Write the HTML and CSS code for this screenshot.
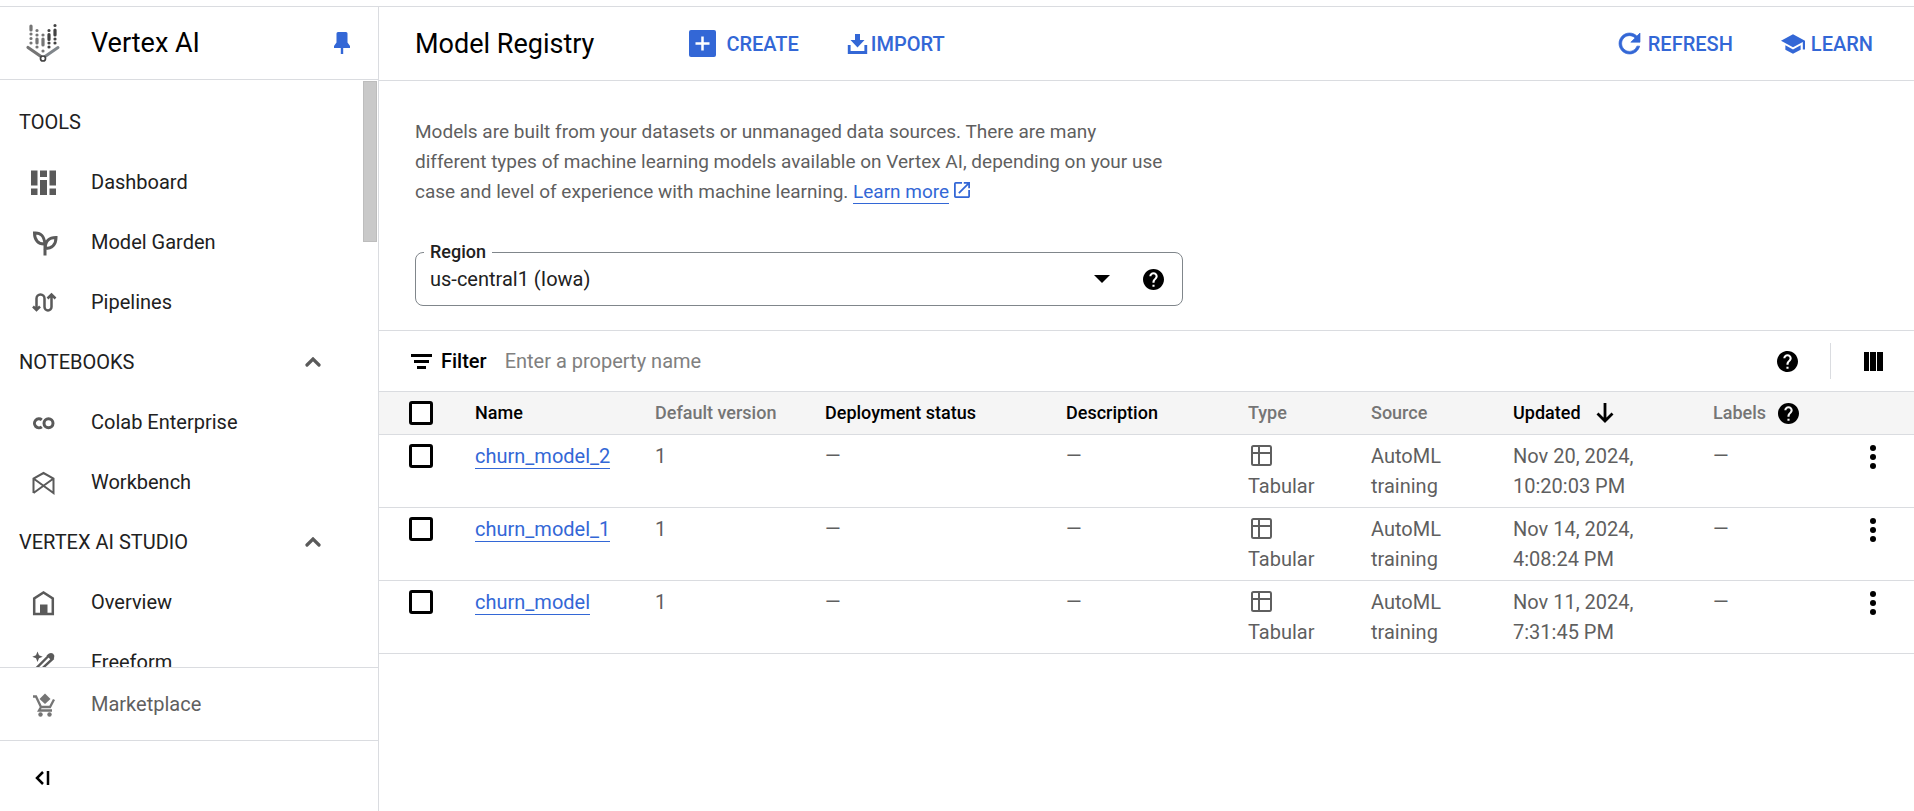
FILE: index.html
```html
<!DOCTYPE html>
<html lang="en">
<head>
<meta charset="utf-8">
<title>Model Registry – Vertex AI</title>
<link rel="stylesheet" href="styles.css">
</head>
<body>
<svg class="sprite" aria-hidden="true">
  <symbol id="i-help" viewBox="2 2 20 20"><path d="M12 2C6.48 2 2 6.48 2 12s4.48 10 10 10 10-4.48 10-10S17.52 2 12 2zm1 17h-2v-2h2v2zm2.07-7.75l-.9.92C13.45 12.9 13 13.5 13 15h-2v-.5c0-1.1.45-2.1 1.17-2.83l1.24-1.26c.37-.36.59-.86.59-1.41 0-1.1-.9-2-2-2s-2 .9-2 2H8c0-2.21 1.79-4 4-4s4 1.79 4 4c0 .88-.36 1.68-.93 2.25z"/></symbol>
  <symbol id="i-up" viewBox="0 0 16 10"><path d="M2 8l6-6 6 6" fill="none" stroke="currentColor" stroke-width="3.200" stroke-linecap="round"/></symbol>
  <symbol id="i-table" viewBox="0 0 21 21"><path d="M2.500 1h16a1.500 1.500 0 0 1 1.500 1.500v16a1.500 1.500 0 0 1-1.500 1.500h-16a1.500 1.500 0 0 1-1.500-1.500v-16a1.500 1.500 0 0 1 1.500-1.500zM8 1v19M1 8h19" fill="none" stroke="currentColor" stroke-width="2"/></symbol>
  <symbol id="i-dots" viewBox="0 0 6 24"><circle cx="3" cy="3" r="3"/><circle cx="3" cy="12" r="3"/><circle cx="3" cy="21" r="3"/></symbol>
</svg>
<div class="app">
  <aside class="sidebar">
    <header class="brand">
      <svg class="brand-logo" viewBox="0 0 34 40" aria-hidden="true">
        <g fill="none" stroke="#757575" stroke-width="3.200" stroke-linecap="round">
          <path d="M5 3v4M5 11v0M5 15.500v0M5 20v0"/>
          <path d="M11 7.500v0M11 12v0M11 16v4M11 24v0"/>
          <path d="M17 12v0M17 16v6M17 28v0"/>
          <path d="M2 24.500l13 9"/>
        </g>
        <g fill="none" stroke="#424242" stroke-width="3.200" stroke-linecap="round">
          <path d="M23 7.500v0M23 11.500v5M23 20v0M23 24v0"/>
          <path d="M29 2.500v0M29 7v5M29 16v0M29 20v0"/>
        </g>
        <path d="M32 24.500l-13 9" fill="none" stroke="#80868b" stroke-width="3" stroke-linecap="round"/>
        <circle cx="17" cy="35.500" r="2.500" fill="#fff" stroke="#424242" stroke-width="1.700"/>
      </svg>
      <span class="brand-name">Vertex AI</span>
      <button class="icon-button pin" aria-label="Unpin navigation"><svg class="i-pin" viewBox="0 0 16 22"><path d="M4 0h8a1.500 1.500 0 0 1 1.500 1.500V10.500L16 14v2H9.200v6H6.800v-6H0v-2l2.500-3.500V1.500A1.500 1.500 0 0 1 4 0z"/></svg></button>
    </header>
    <div class="nav-area">
      <nav class="nav" aria-label="Vertex AI">
        <h2 class="nav-head">TOOLS</h2>
        <a class="nav-item" href="#"><svg class="i-nav" viewBox="0 0 27 27"><path d="M1 1.500h6.500v15H1zM1 19.500h6.500v6.500H1zM10 1.500h7V8h-7zM10 11h7v15h-7zM19.500 1.500H26v15h-6.500zM19.500 19.500H26v6.500h-6.500z"/></svg>Dashboard</a>
        <a class="nav-item" href="#"><svg class="i-nav" viewBox="0 0 27 27"><path d="M4.500 4c6.500-.5 9.500 3 10.500 11-7 .5-10.500-4-10.500-11zM26 8.500c-7.500 0-10.500 3.500-11 11 7 0 11-4 11-11zM15 14v12.500" fill="none" stroke="currentColor" stroke-width="3"/></svg>Model Garden</a>
        <a class="nav-item" href="#"><svg class="i-nav" viewBox="0 0 27 27"><path d="M6.500 20V9.500a4 4 0 0 1 8 0v8.500a3.500 3.500 0 0 0 7 0V7M3 17.500l3.500 3.500 3.500-3.500M17.500 9.500l4-4 4 4" fill="none" stroke="currentColor" stroke-width="2.500"/></svg>Pipelines</a>
        <h2 class="nav-head"><span>NOTEBOOKS</span><button class="icon-button" aria-label="Collapse Notebooks"><svg class="i-up"><use href="#i-up"/></svg></button></h2>
        <a class="nav-item" href="#"><svg class="i-nav" viewBox="0 0 27 27"><g fill="none" stroke="currentColor" stroke-width="3"><path d="M11.800 10.800a4.500 4.500 0 1 0 0 7"/><circle cx="18.500" cy="14.300" r="4.500"/></g></svg>Colab Enterprise</a>
        <a class="nav-item" href="#"><svg class="i-nav" viewBox="0 0 27 27"><path d="M3.500 24V9.500l10-5.500 10 5.500V24l-20-14.500M23.500 9.500L3.500 24" fill="none" stroke="currentColor" stroke-width="2"/></svg>Workbench</a>
        <h2 class="nav-head"><span>VERTEX AI STUDIO</span><button class="icon-button" aria-label="Collapse Vertex AI Studio"><svg class="i-up"><use href="#i-up"/></svg></button></h2>
        <a class="nav-item" href="#"><svg class="i-nav" viewBox="0 0 27 27"><path d="M4.200 25V9.500L13.500 3.500l9.300 6V25z" fill="none" stroke="currentColor" stroke-width="2.500"/><path d="M10 15.500h7.500v10H10z"/></svg>Overview</a>
        <a class="nav-item" href="#"><svg class="i-nav" viewBox="0 0 27 27"><path d="M7.500 2.500l1.500 3.700 3.700 1.500L9 9.200l-1.500 3.700L6 9.200 2.300 7.700 6 6.200z"/><path d="M5 20.500L19.500 6M9.500 22L23.500 9" fill="none" stroke="currentColor" stroke-width="2.400"/><path d="M16.500 6.500l2.500-2a3.500 3.500 0 0 1 5 4.500l-2.500 2.500z"/></svg>Freeform</a>
      </nav>
      <div class="scrollbar" aria-hidden="true"></div>
    </div>
    <a class="market" href="#"><svg class="i-nav" viewBox="0 0 27 27"><path d="M3 5.500h3l5 10.500h9l4-7.500M11 16l-2 3.500h13" fill="none" stroke="currentColor" stroke-width="2.300"/><path d="M15 2.500l5.500 5.500-5.500 5-5.500-5z"/><circle cx="10.500" cy="23.500" r="2.200"/><circle cx="19.500" cy="23.500" r="2.200"/></svg>Marketplace</a>
    <footer class="side-foot"><button class="icon-button" aria-label="Collapse navigation"><svg class="i-collapse" viewBox="0 0 15 14"><path d="M8 1L2 7l6 6M13 0v14" fill="none" stroke="currentColor" stroke-width="2.500"/></svg></button></footer>
  </aside>
  <main class="main">
    <header class="toolbar">
      <h1 class="title">Model Registry</h1>
      <button class="action create"><svg class="i-create" viewBox="0 0 27 27"><rect width="27" height="27" rx="2"/><path d="M13.500 6.500v14M6.500 13.500h14" stroke="#fff" stroke-width="2.500"/></svg>CREATE</button>
      <button class="action import"><svg class="i-import" viewBox="0 0 19 20"><path d="M7 0h5v6h4.500l-7 7.500L2.500 6H7z"/><path d="M1.200 11v7.500h16.600V11" fill="none" stroke="currentColor" stroke-width="2.800"/></svg>IMPORT</button>
      <button class="action refresh"><svg class="i-refresh" viewBox="4 4 16 16"><path d="M17.650 6.350C16.200 4.900 14.210 4 12 4c-4.420 0-7.990 3.580-7.990 8s3.570 8 7.990 8c3.730 0 6.840-2.550 7.730-6h-2.080c-.82 2.330-3.040 4-5.650 4-3.310 0-6-2.690-6-6s2.690-6 6-6c1.660 0 3.140.69 4.220 1.780L13 11h7V4l-2.350 2.350z" stroke="currentColor" stroke-width=".5"/></svg>REFRESH</button>
      <button class="action learn"><svg class="i-learn" viewBox="1 3 22 18"><path d="M5 13.180v4L12 21l7-3.820v-4L12 17l-7-3.820zM12 3L1 9l11 6 9-4.910V17h2V9L12 3z"/></svg>LEARN</button>
    </header>
    <section class="intro">
      <p class="lead">Models are built from your datasets or unmanaged data sources. There are many <br>different types of machine learning models available on Vertex AI, depending on your use case and level of experience with machine learning. <a class="link" href="#">Learn more</a> <svg class="i-ext" viewBox="3 3 18 18"><path d="M19 19H5V5h7V3H5a2 2 0 0 0-2 2v14a2 2 0 0 0 2 2h14c1.100 0 2-.9 2-2v-7h-2v7zM14 3v2h3.590l-9.830 9.830 1.410 1.410L19 6.410V10h2V3h-7z"/></svg></p>
      <div class="field">
        <label class="field-label" for="region">Region</label>
        <select class="field-select" id="region"><option>us-central1 (Iowa)</option></select>
        <svg class="i-caret" viewBox="0 0 16 8" aria-hidden="true"><path d="M0 0h16L8 8z"/></svg>
        <button class="icon-button" aria-label="Region help"><svg class="i-help"><use href="#i-help"/></svg></button>
      </div>
    </section>
    <section class="filter">
      <svg class="i-filter" viewBox="0 0 21 15"><path d="M0 0h21v3H0zM3 6h15v3H3zM6 12h9v3H6z"/></svg>
      <label class="filter-label" for="filter">Filter</label>
      <input class="filter-input" id="filter" type="text" placeholder="Enter a property name">
      <button class="icon-button" aria-label="Filter help"><svg class="i-help"><use href="#i-help"/></svg></button>
      <span class="divider"></span>
      <button class="icon-button" aria-label="Column display options"><svg class="i-cols" viewBox="0 0 19 19"><path d="M0 0h5v19H0zM6 0h6v19H6zM13 0h6v19h-6z"/></svg></button>
    </section>
    <table class="models">
      <colgroup><col class="c-check"><col class="c-name"><col class="c-version"><col class="c-deploy"><col class="c-desc"><col class="c-type"><col class="c-source"><col class="c-updated"><col class="c-labels"><col class="c-menu"></colgroup>
      <thead>
        <tr>
          <th class="pick"><input class="check" type="checkbox" aria-label="Select all"></th>
          <th class="strong">Name</th><th>Default version</th><th class="strong">Deployment status</th><th class="strong">Description</th><th>Type</th><th>Source</th>
          <th class="strong"><span class="th-row sort">Updated<svg class="i-down" viewBox="0 0 18 20"><path d="M9 0v18M1.500 10.500L9 18l7.500-7.500" fill="none" stroke="currentColor" stroke-width="2.800"/></svg></span></th>
          <th><span class="th-row">Labels<button class="icon-button" aria-label="Labels help"><svg class="i-help"><use href="#i-help"/></svg></button></span></th>
          <th></th>
        </tr>
      </thead>
      <tbody>
        <tr>
          <td class="pick"><input class="check" type="checkbox" aria-label="Select churn_model_2"></td>
          <td><a class="link" href="#">churn_model_2</a></td><td>1</td><td>—</td><td>—</td>
          <td><svg class="i-table"><use href="#i-table"/></svg>Tabular</td><td>AutoML<br>training</td><td>Nov 20, 2024,<br>10:20:03 PM</td><td>—</td>
          <td class="menu"><button class="icon-button" aria-label="Actions"><svg class="i-dots"><use href="#i-dots"/></svg></button></td>
        </tr>
        <tr>
          <td class="pick"><input class="check" type="checkbox" aria-label="Select churn_model_1"></td>
          <td><a class="link" href="#">churn_model_1</a></td><td>1</td><td>—</td><td>—</td>
          <td><svg class="i-table"><use href="#i-table"/></svg>Tabular</td><td>AutoML<br>training</td><td>Nov 14, 2024,<br>4:08:24 PM</td><td>—</td>
          <td class="menu"><button class="icon-button" aria-label="Actions"><svg class="i-dots"><use href="#i-dots"/></svg></button></td>
        </tr>
        <tr>
          <td class="pick"><input class="check" type="checkbox" aria-label="Select churn_model"></td>
          <td><a class="link" href="#">churn_model</a></td><td>1</td><td>—</td><td>—</td>
          <td><svg class="i-table"><use href="#i-table"/></svg>Tabular</td><td>AutoML<br>training</td><td>Nov 11, 2024,<br>7:31:45 PM</td><td>—</td>
          <td class="menu"><button class="icon-button" aria-label="Actions"><svg class="i-dots"><use href="#i-dots"/></svg></button></td>
        </tr>
      </tbody>
    </table>
  </main>
</div>
</body>
</html>
```
FILE: styles.css
```css
:root {
  --line: #dadce0;
  --blue: #3367d6;
  --ink: #212121;
  --muted: #5f5f5f;
}
* { box-sizing: border-box; }
body {
  margin: 0;
  padding-top: 6px;
  height: 100vh;
  overflow: hidden;
  background: #fff;
  color: var(--ink);
  font: 400 20px/30px Roboto, "Liberation Sans", sans-serif;
}
svg { display: block; fill: currentColor; flex: none; overflow: visible; }
.sprite { position: absolute; width: 0; height: 0; }
button, input, select { font: inherit; color: inherit; }
.icon-button { display: flex; padding: 0; border: 0; background: none; color: #000; cursor: pointer; }

.app { display: flex; height: 100%; border-top: 1px solid var(--line); }

/* Sidebar */
.sidebar { display: flex; flex-direction: column; flex: none; width: 379px; border-right: 1px solid var(--line); }
.brand { display: flex; align-items: center; height: 73px; flex: none; padding: 0 28px 0 26px; border-bottom: 1px solid var(--line); }
.brand-logo { width: 34px; height: 40px; }
.brand-name { margin-left: 31px; font-size: 27px; color: #000; }
.pin { margin-left: auto; color: var(--blue); }
.i-pin { width: 16px; height: 22px; }
.nav-area { display: flex; flex: 1; min-height: 0; overflow: hidden; padding-top: 1px; }
.nav { flex: 1; min-width: 0; padding-top: 11px; }
.nav-head { display: flex; align-items: center; justify-content: space-between; height: 60px; margin: 0; padding: 0 42px 0 19px; font-size: 20px; font-weight: 400; }
.nav-head .icon-button { color: #5a5a5a; }
.nav-item, .market { display: flex; align-items: center; gap: 34px; height: 60px; padding-left: 30px; color: var(--ink); text-decoration: none; }
.i-nav { width: 27px; height: 27px; color: #5a5a5a; }
.i-up { width: 16px; height: 10px; }
.scrollbar { width: 14px; height: 161px; margin-right: 1px; border: 1px solid #bdbdbd; background: #c9c9c9; }
.market { flex: none; height: 74px; border-top: 1px solid var(--line); border-bottom: 1px solid var(--line); color: var(--muted); }
.market .i-nav { color: #757575; }
.side-foot { display: flex; align-items: center; flex: none; height: 70px; padding: 4px 0 0 35px; }
.i-collapse { width: 15px; height: 14px; }

/* Main */
.main { flex: 1; min-width: 0; }
.toolbar { display: flex; align-items: center; height: 74px; padding: 0 41px 0 36px; border-bottom: 1px solid var(--line); }
.title { margin: 0; font-size: 27px; font-weight: 400; color: #000; }
.action { display: flex; align-items: center; padding: 0; border: 0; background: none; color: var(--blue); font-weight: 500; cursor: pointer; }
.create { gap: 10px; margin-left: 95px; }
.import { gap: 4px; margin-left: 49px; }
.refresh { gap: 8px; margin-left: auto; }
.learn { gap: 6px; margin-left: 48px; }
.i-create { width: 27px; height: 27px; }
.i-import { width: 19px; height: 20px; }
.i-refresh { width: 21px; height: 21px; }
.i-learn { width: 24px; height: 20px; }
.intro { padding: 36px 36px 24px; border-bottom: 1px solid var(--line); }
.lead { max-width: 768px; margin: 0 0 45px; font-size: 19px; color: var(--muted); }
.link { color: var(--blue); text-decoration: none; border-bottom: 1px solid var(--blue); }
.i-ext { display: inline-block; width: 16px; height: 16px; color: var(--blue); }
.field { position: relative; display: flex; align-items: center; max-width: 768px; height: 54px; padding-right: 18px; border: 1px solid #80868b; border-radius: 8px; }
.field-label { position: absolute; top: -11px; left: 8px; padding: 0 6px; background: #fff; font-size: 18px; line-height: 20px; font-weight: 500; }
.field-select { appearance: none; flex: 1; min-width: 0; height: 52px; padding: 0 14px; border: 0; background: none; }
.i-caret { width: 16px; height: 8px; margin: 0 33px 0 0; color: #000; }
.i-help { width: 21px; height: 21px; }
.filter { display: flex; align-items: center; height: 60px; padding: 0 31px 0 32px; color: #000; }
.i-filter { width: 21px; height: 15px; }
.filter-label { margin: 0 18px 0 9px; font-weight: 500; }
.filter-input { flex: 1; min-width: 0; padding: 0; border: 0; outline: 0; background: none; }
.filter-input::placeholder { color: #808080; opacity: 1; }
.divider { width: 1px; height: 36px; margin: 0 33px 0 32px; background: var(--line); }
.i-cols { width: 19px; height: 19px; }

/* Table */
.models { width: 100%; table-layout: fixed; border-collapse: separate; border-spacing: 0; color: var(--muted); }
.c-check { width: 96px; }
.c-name { width: 180px; }
.c-version { width: 170px; }
.c-deploy { width: 241px; }
.c-desc { width: 182px; }
.c-type { width: 123px; }
.c-source { width: 142px; }
.c-updated { width: 200px; }
.c-labels { width: 157px; }
.c-menu { width: 44px; }
.models th, .models td { padding: 0; text-align: left; vertical-align: top; border-bottom: 1px solid var(--line); }
.models th { height: 44px; vertical-align: middle; border-top: 1px solid var(--line); background: #f5f5f5; color: #757575; font-size: 18px; font-weight: 500; }
.models .strong { color: #000; }
.models td { height: 73px; padding: 6px 0; }
.models .pick { padding-left: 30px; }
.models td.pick { padding-top: 9px; }
.models td.menu { padding-top: 10px; }
.check { display: block; appearance: none; width: 24px; height: 24px; margin: 0; border: 3px solid #000; border-radius: 3px; background: #fff; }
.th-row { display: flex; align-items: center; gap: 12px; }
.sort { gap: 15px; }
.i-down { width: 18px; height: 20px; color: #000; }
.i-table { width: 21px; height: 21px; margin: 4px 0 5px 3px; }
.i-dots { width: 6px; height: 24px; }
```
